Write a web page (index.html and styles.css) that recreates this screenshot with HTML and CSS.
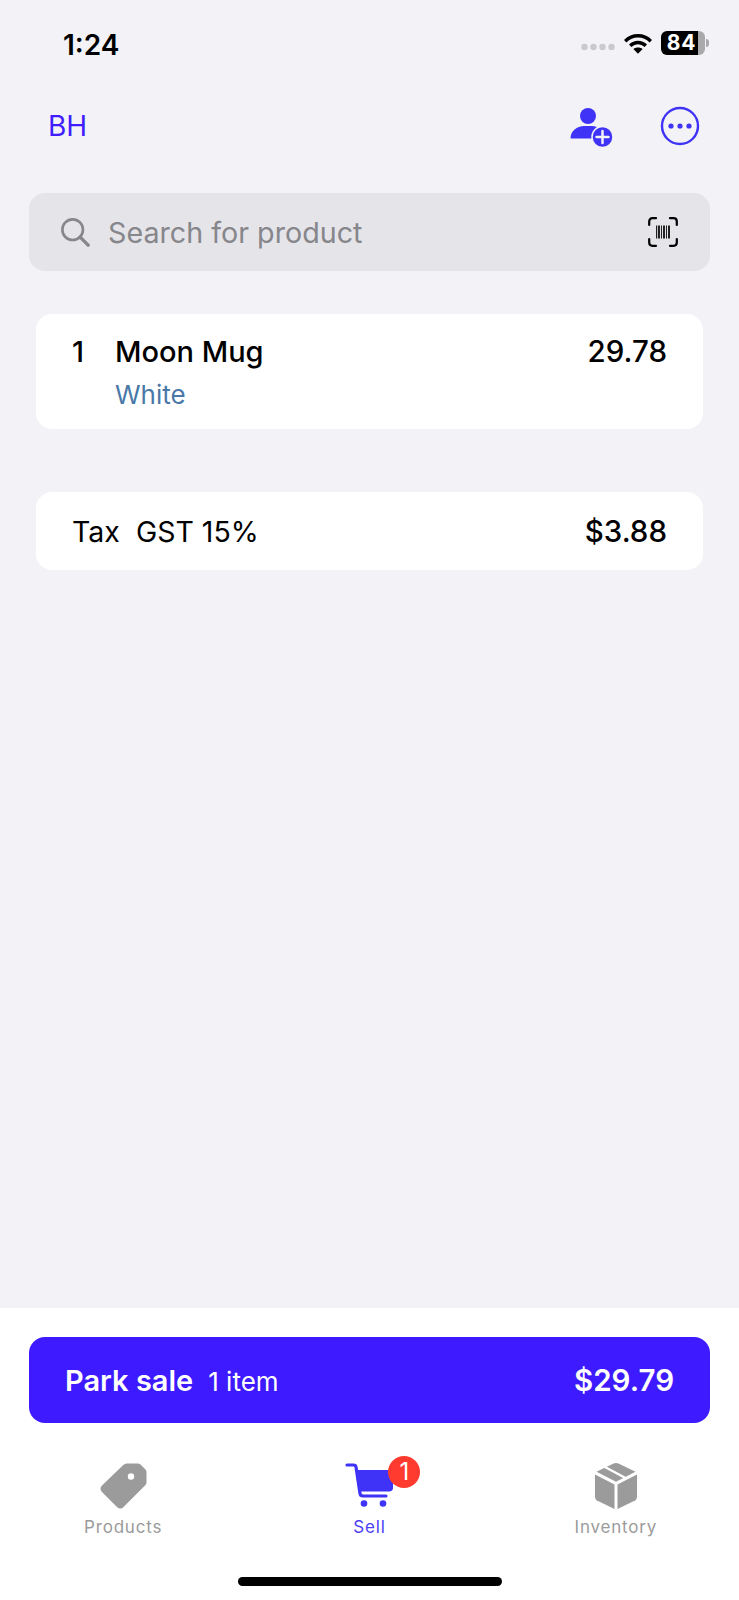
FILE: index.html
```html
<!DOCTYPE html>
<html lang="en">
<head>
<meta charset="utf-8">
<title>Sell</title>
<link rel="stylesheet" href="styles.css">
</head>
<body>
<div class="screen">
  <div class="status">
    <span class="time">1:24</span>
    <div class="status-right">
      <svg class="signal" width="34" height="8" viewBox="0 0 34 8"><g fill="#c9c9ce"><circle cx="3.500" cy="4" r="3.200"/><circle cx="12.500" cy="4" r="3.200"/><circle cx="21.500" cy="4" r="3.200"/><circle cx="30.500" cy="4" r="3.200"/></g></svg>
      <svg class="wifi" width="28" height="21" viewBox="0 0 28 21"><g fill="none" stroke="#000" stroke-width="3.400"><path d="M1.200 8.200C8.400 1 19.600 1 26.800 8.200"/><path d="M6.200 12.800C10.800 8.400 17.200 8.400 21.800 12.800"/></g><path d="M9.400 16C12 14 16 14 18.600 16L14 20.800Z" fill="#000"/></svg>
      <div class="battery"><div class="battery-body"><span class="battery-num">84</span></div><div class="battery-cap"></div></div>
    </div>
  </div>
  <div class="nav">
    <span class="initials">BH</span>
    <div class="nav-actions">
      <svg width="44" height="44" viewBox="0 0 44 44"><circle cx="19" cy="12" r="8" fill="#3f33f8"/><path d="M1.500 34C1.500 27 8 22 15 22H23C26 22 28 23 30 24.500L25 34.500H3C2 34.500 1.500 34.500 1.500 34Z" fill="#3f33f8"/><circle cx="33.500" cy="33" r="10.500" fill="#3f33f8" stroke="#f2f2f7" stroke-width="1.500"/><path d="M33.500 27V39M27.500 33H39.500" stroke="#f2f2f7" stroke-width="2.500" stroke-linecap="round"/></svg>
      <svg width="40" height="40" viewBox="0 0 40 40"><circle cx="20" cy="20" r="18" fill="none" stroke="#3f33f8" stroke-width="2.400"/><g fill="#3f33f8"><circle cx="11" cy="20" r="2.600"/><circle cx="20" cy="20" r="2.600"/><circle cx="29" cy="20" r="2.600"/></g></svg>
    </div>
  </div>
  <div class="search">
    <svg width="30" height="30" viewBox="0 0 32 32"><circle cx="13.500" cy="13.500" r="11" fill="none" stroke="#86868b" stroke-width="2.800"/><path d="M21.500 21.500L30 30" stroke="#86868b" stroke-width="3.600" stroke-linecap="round"/></svg>
    <span class="search-text">Search for product</span>
    <svg class="barcode" width="30" height="30" viewBox="0 0 30 30"><g fill="none" stroke="#000" stroke-width="2.200" stroke-linecap="round"><path d="M1.200 8V4.500C1.200 2.500 2.500 1.200 4.500 1.200H8"/><path d="M22 1.200H25.500C27.500 1.200 28.800 2.500 28.800 4.500V8"/><path d="M1.200 22V25.500C1.200 27.500 2.500 28.800 4.500 28.800H8"/><path d="M22 28.800H25.500C27.500 28.800 28.800 27.500 28.800 25.500V22"/></g><g fill="#222"><rect x="8" y="8.500" width="1.200" height="13"/><rect x="10" y="8.500" width="2" height="13"/><rect x="13" y="8.500" width="1" height="13"/><rect x="15" y="8.500" width="2" height="13"/><rect x="18" y="8.500" width="1" height="13"/><rect x="20" y="8.500" width="2" height="13"/></g></svg>
  </div>
  <main class="content">
    <div class="card item">
      <span class="qty">1</span>
      <div class="item-info">
        <div class="item-name">Moon Mug</div>
        <div class="item-variant">White</div>
      </div>
      <span class="price">29.78</span>
    </div>
    <div class="card tax">
      <span class="tax-label">Tax&nbsp; GST 15%</span>
      <span class="price">$3.88</span>
    </div>
  </main>
  <footer class="footer">
    <div class="park">
      <div class="park-left"><span class="park-title">Park sale</span><span class="park-count">1 item</span></div>
      <span class="park-total">$29.79</span>
    </div>
    <nav class="tabs">
      <div class="tab">
        <svg width="48" height="48" viewBox="0 0 48 48"><path fill-rule="evenodd" fill="#9b9b9b" d="M29 1.500H38.500C40 1.500 41 2 42 3L46 7C47 8 47.500 9 47.500 10.500V20C47.500 21.500 47 22.500 46 23.500L24.500 45C22.500 47 20 47 18 45L3 30C1 28 1 25.500 3 23.500L24.500 2.800C26 1.800 27.500 1.500 29 1.500ZM32 11.300A3.200 3.200 0 1 0 32 17.700A3.200 3.200 0 1 0 32 11.300Z"/></svg>
        <span class="tab-label">Products</span>
      </div>
      <div class="tab tab-active">
        <div class="cart">
          <svg width="48" height="48" viewBox="0 0 48 48"><path d="M2 3H8.500C10 3 10.800 3.800 11 5L15 31.500C15.300 33.500 16.500 34 18 34H41" fill="none" stroke="#3f33f8" stroke-width="3.200" stroke-linecap="round" stroke-linejoin="round"/><path d="M11.500 8H48V26C48 28 46.500 29.500 44 29.500H14.500Z" fill="#3f33f8"/><circle cx="19" cy="41.500" r="3.300" fill="#3f33f8"/><circle cx="38" cy="41.500" r="3.300" fill="#3f33f8"/></svg>
          <span class="badge">1</span>
        </div>
        <span class="tab-label">Sell</span>
      </div>
      <div class="tab">
        <svg width="44" height="48" viewBox="0 0 44 48"><g fill="#9b9b9b"><path d="M2.500 9.800 19 1.800C21 .8 23 .8 25 1.800L41.500 9.800 22 19.800Z"/><path d="M1 12.500 20.500 22.500V47L4 39C2 38 1 36.500 1 34.500Z"/><path d="M43 12.500 23.500 22.500V47L40 39C42 38 43 36.500 43 34.500Z"/></g><path d="M10.500 4.800 31.500 16" stroke="#fff" stroke-width="2.400" fill="none"/></svg>
        <span class="tab-label">Inventory</span>
      </div>
    </nav>
    <div class="home-row"><div class="home"></div></div>
  </footer>
</div>
</body>
</html>
```

FILE: styles.css
```css
* { box-sizing: border-box; }
html, body { margin: 0; padding: 0; }
body { font-family: Inter, "Liberation Sans", sans-serif; background: #f2f2f7; color: #000; }
.screen { width: 739px; height: 1600px; display: flex; flex-direction: column; overflow: hidden; }

.status { height: 84px; display: flex; justify-content: space-between; align-items: flex-start; padding: 28px 30px 0 63px; }
.time { font-size: 28px; font-weight: 600; line-height: 34px; }
.status-right { display: flex; align-items: center; padding-top: 3px; }
.signal { margin-top: 8px; margin-right: 9px; }
.wifi { margin-right: 9px; }
.battery { display: flex; align-items: center; }
.battery-body { width: 44px; height: 24px; border-radius: 6px; background: linear-gradient(to right, #000 84%, #a9a9ab 84%); display: flex; align-items: center; justify-content: center; padding-right: 3px; }
.battery-num { color: #fff; font-size: 21px; font-weight: 700; line-height: 24px; letter-spacing: .8px; }
.battery-cap { width: 3px; height: 8px; margin-left: 1px; border-radius: 0 3px 3px 0; background: #a9a9ab; }

.nav { height: 84px; display: flex; justify-content: space-between; align-items: center; padding: 0 39px 0 48px; }
.initials { font-size: 28px; color: #3f1dff; line-height: 34px; }
.nav-actions { display: flex; align-items: center; gap: 47px; }

.search { margin: 25px 29px 0; height: 78px; border-radius: 16px; background: #e4e4e9; display: flex; align-items: center; padding: 0 32px 0 31px; }
.search-text { flex: 1; margin-left: 18px; font-size: 28.700px; color: #86868b; }

.content { flex: 1; padding: 43px 36px 0; display: flex; flex-direction: column; gap: 63px; }
.card { background: #fff; border-radius: 16px; padding: 0 36px; display: flex; }
.item { height: 115px; padding-top: 20px; align-items: flex-start; }
.qty { width: 43px; font-size: 29px; font-weight: 500; line-height: 36px; }
.item-info { flex: 1; }
.item-name { font-size: 29px; font-weight: 500; line-height: 36px; }
.item-variant { font-size: 26px; line-height: 32px; margin-top: 9px; color: #4a78a8; }
.price { font-size: 29.500px; font-weight: 500; line-height: 36px; }
.item .price { margin-top: -1px; }
.tax { height: 78px; align-items: center; justify-content: space-between; }
.tax-label { font-size: 28.500px; }

.footer { height: 292px; background: #fff; display: flex; flex-direction: column; padding: 29px 29px 0; }
.park { height: 86px; border-radius: 16px; background: #3d1aff; color: #fff; display: flex; align-items: center; justify-content: space-between; padding: 0 36px; }
.park-left { display: flex; align-items: baseline; gap: 15px; }
.park-title { font-size: 29px; font-weight: 600; }
.park-count { font-size: 26px; }
.park-total { font-size: 29.500px; font-weight: 600; }

.tabs { height: 154px; padding-top: 39px; display: grid; grid-template-columns: 1fr 1fr 1fr; margin: 0 -29px; }
.tab { display: flex; flex-direction: column; align-items: center; gap: 5px; color: #9b9b9b; }
.tab svg { display: block; }
.tab-active { color: #4b3ff7; }
.tab-label { font-size: 17px; font-weight: 400; letter-spacing: .8px; line-height: 24px; }
.cart { position: relative; }
.badge { position: absolute; left: 43px; top: -6px; width: 32px; height: 32px; border-radius: 50%; background: #ff3b30; color: #fff; font-size: 24px; line-height: 32px; text-align: center; }
.home-row { display: flex; justify-content: center; }
.home { width: 264px; height: 9px; border-radius: 5px; background: #000; }
```
